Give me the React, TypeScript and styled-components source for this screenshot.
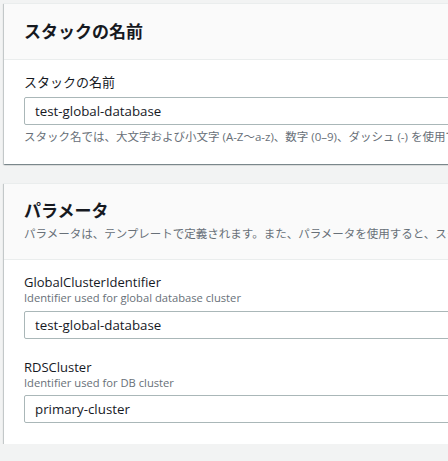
import React from "react";
import styled, { createGlobalStyle } from "styled-components";

const Global = createGlobalStyle`
  html, body { margin: 0; padding: 0; background: #f2f3f3; overflow: hidden; }
  body { font-family: "Open Sans", "Noto Sans CJK JP", sans-serif; color: #16191f; }
`;

const Page = styled.div`
  display: flex;
  flex-direction: column;
  gap: 19px;
  padding: 3px 0 0 4px;
  width: 640px;
`;

const Card = styled.section`
  background: #ffffff;
  box-shadow: 0 1px 1px 0 rgba(0, 28, 36, 0.3), 1px 1px 1px 0 rgba(0, 28, 36, 0.15),
    -1px 1px 1px 0 rgba(0, 28, 36, 0.15);
  border-top: 1px solid #eaeded;
`;

const Header = styled.header<{ $top: number }>`
  background: #fafafa;
  border-bottom: 1px solid #eaeded;
  padding: ${(p) => p.$top}px 20px 16px;
`;

const Title = styled.h2`
  margin: 0;
  font-size: 17px;
  line-height: 22px;
  font-weight: 700;
  color: #16191f;
`;

const Subtitle = styled.p`
  margin: 3px 0 0;
  font-size: 11.5px;
  line-height: 18px;
  color: #687078;
  white-space: nowrap;
`;

const Body = styled.div<{ $bottom: number }>`
  display: flex;
  flex-direction: column;
  gap: 20px;
  padding: 14px 20px ${(p) => p.$bottom}px;
`;

const Field = styled.div`
  display: flex;
  flex-direction: column;
`;

const Label = styled.label`
  font-size: 13px;
  line-height: 16px;
  color: #16191f;
  white-space: nowrap;
`;

const Desc = styled.div`
  font-size: 11.2px;
  line-height: 16px;
  color: #687078;
  white-space: nowrap;
`;

const Input = styled.input<{ $top: number }>`
  margin-top: ${(p) => p.$top}px;
  box-sizing: border-box;
  height: 28px;
  width: 100%;
  border: 1px solid #aab7b8;
  border-radius: 2px;
  padding: 0 10px;
  font-family: "Open Sans", "Noto Sans CJK JP", sans-serif;
  font-size: 13.3px;
  color: #16191f;
  background: #fff;
  outline: none;
`;

const Hint = styled.div`
  margin-top: 4px;
  font-size: 11.5px;
  line-height: 16px;
  color: #687078;
  white-space: nowrap;
`;

export default function App() {
  return (
    <>
      <Global />
      <Page>
        <Card>
          <Header $top={17}>
            <Title>スタックの名前</Title>
          </Header>
          <Body $bottom={19}>
            <Field>
              <Label>スタックの名前</Label>
              <Input $top={7} defaultValue="test-global-database" />
              <Hint>
                スタック名では、大文字および小文字 (A-Z〜a-z)、数字 (0–9)、ダッシュ (-) を使用できます。
              </Hint>
            </Field>
          </Body>
        </Card>
        <Card>
          <Header $top={16}>
            <Title>パラメータ</Title>
            <Subtitle>
              パラメータは、テンプレートで定義されます。また、パラメータを使用すると、スタックを作成または更新する際にカスタム値を入力できます。
            </Subtitle>
          </Header>
          <Body $bottom={21}>
            <Field>
              <Label>GlobalClusterIdentifier</Label>
              <Desc>Identifier used for global database cluster</Desc>
              <Input $top={5} defaultValue="test-global-database" />
            </Field>
            <Field>
              <Label>RDSCluster</Label>
              <Desc>Identifier used for DB cluster</Desc>
              <Input $top={4} defaultValue="primary-cluster" />
            </Field>
          </Body>
        </Card>
      </Page>
    </>
  );
}
